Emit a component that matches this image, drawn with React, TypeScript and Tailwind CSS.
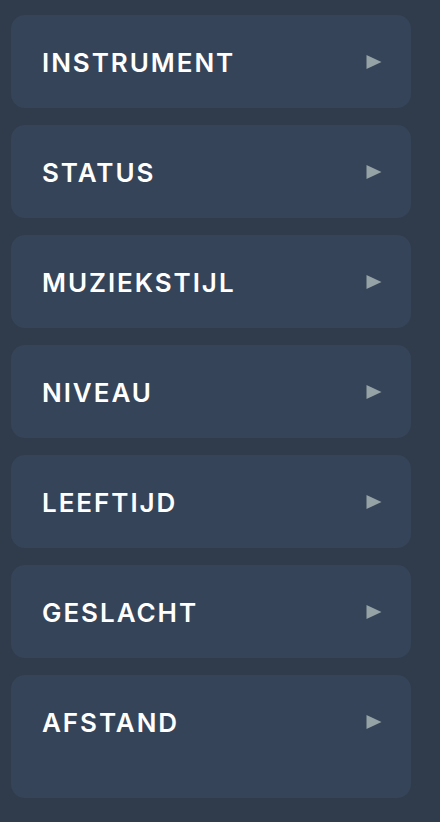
const filters = ["INSTRUMENT", "STATUS", "MUZIEKSTIJL", "NIVEAU", "LEEFTIJD", "GESLACHT", "AFSTAND"];

export default function App() {
  return (
    <div className="min-h-[822px] w-[440px] bg-[#303c4c] px-[11px] pt-[15px] font-['Inter',sans-serif]">
      <div className="flex w-[400px] flex-col gap-[17px]">
        {filters.map((label, i) => (
          <button
            key={label}
            className={
              "flex w-full items-start justify-between rounded-[14px] bg-[#354458] pl-[31px] pr-[29px] pt-[34px] text-left " +
              (i === filters.length - 1 ? "h-[123px]" : "h-[93px]")
            }
          >
            <span className="text-[26px] font-semibold leading-[28px] tracking-[0.075em] text-white">{label}</span>
            <svg className="mt-[5px]" width="16" height="16" viewBox="0 0 16 16">
              <path d="M0.5 1 L15.5 8 L0.5 15 Z" fill="#95a2a6" />
            </svg>
          </button>
        ))}
      </div>
    </div>
  );
}
